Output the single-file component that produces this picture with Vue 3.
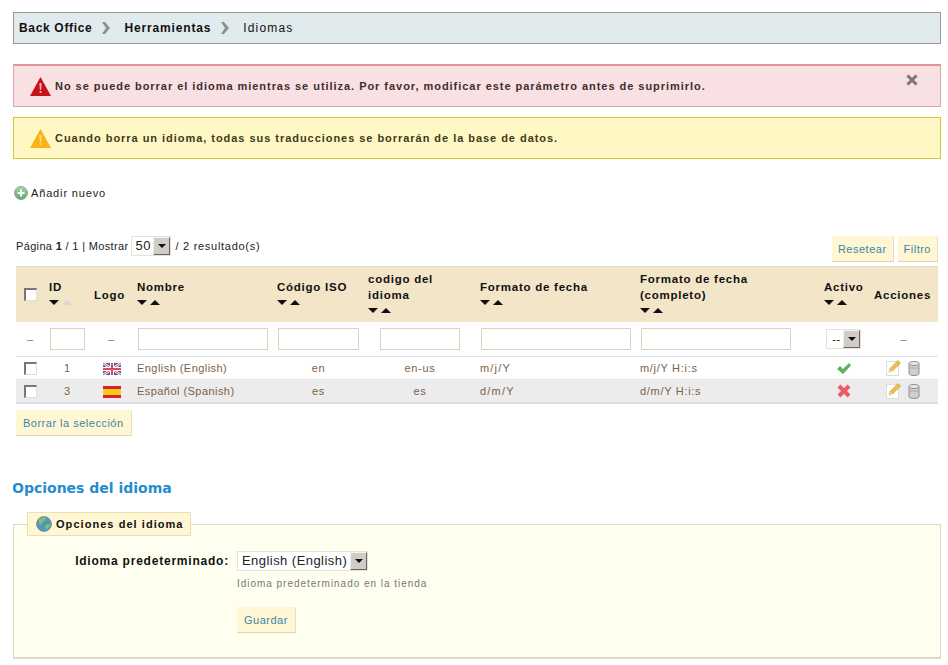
<script setup>
const rows = [
  { id: 1, flag: 'uk', name: 'English (English)', iso: 'en', code: 'en-us', date: 'm/j/Y', full: 'm/j/Y H:i:s', active: true },
  { id: 3, flag: 'es', name: 'Español (Spanish)', iso: 'es', code: 'es', date: 'd/m/Y', full: 'd/m/Y H:i:s', active: false }
]
const widths = [29, 45, 43, 140, 91, 112, 160, 184, 50, 68]
</script>

<template>
  <div class="page">
    <nav class="crumbs">
      <b class="c1">Back Office</b>
      <svg class="chev" width="10" height="12" viewBox="0 0 10 12"><path d="M1 0h3l5 6-5 6H1l4-6z" fill="#8f8f8f"/></svg>
      <b>Herramientas</b>
      <svg class="chev" width="10" height="12" viewBox="0 0 10 12"><path d="M1 0h3l5 6-5 6H1l4-6z" fill="#8f8f8f"/></svg>
      <span class="cur">Idiomas</span>
    </nav>

    <div class="alert error">
      <svg width="21" height="19" viewBox="0 0 21 19"><path d="M10.500 0 21 19H0z" fill="#c8121a"/><path d="M9.400 6h2.200l-.4 7H9.800z" fill="#f3b0a8"/><rect x="9.600" y="14" width="1.800" height="2" fill="#f3b0a8"/></svg>
      <span>No se puede borrar el idioma mientras se utiliza. Por favor, modificar este parámetro antes de suprimirlo.</span>
      <svg class="close" width="12" height="12" viewBox="0 0 12 12"><path d="M1.500 1.500l9 9m0-9l-9 9" stroke="#777" stroke-width="3"/></svg>
    </div>
    <div class="alert warn">
      <svg width="21" height="19" viewBox="0 0 21 19"><path d="M10.500 0 21 19H0z" fill="#fbb216"/><path d="M9.400 6h2.200l-.4 7H9.800z" fill="#fde39a"/><rect x="9.600" y="14" width="1.800" height="2" fill="#fde39a"/></svg>
      <span>Cuando borra un idioma, todas sus traducciones se borrarán de la base de datos.</span>
    </div>

    <a class="add">
      <svg width="14" height="14" viewBox="0 0 14 14"><defs><linearGradient id="addg" x1="0" y1="0" x2="0" y2="1"><stop offset="0" stop-color="#a8d6ae"/><stop offset="1" stop-color="#5fa86e"/></linearGradient></defs><circle cx="7" cy="7" r="6.500" fill="url(#addg)" stroke="#8aa996"/><path d="M7 3.500v7M3.500 7h7" stroke="#fff" stroke-width="2"/></svg>
      Añadir nuevo
    </a>

    <div class="listbar">
      <div class="pager">
        <span class="p1">Página <b>1</b> / 1 | Mostrar</span>
        <span class="sel sel50"><span class="val">50</span><span class="arrow"><i></i></span></span>
        <span class="p2">/ 2 resultado(s)</span>
      </div>
      <div class="btns">
        <button class="btn">Resetear</button>
        <button class="btn">Filtro</button>
      </div>
    </div>

    <table class="grid">
      <colgroup><col v-for="(w, i) in widths" :key="i" :style="{ width: w + 'px' }" /></colgroup>
      <thead>
        <tr>
          <th class="ctr"><span class="chk hchk"></span></th>
          <th>ID<div class="sort"><i class="dn"></i><i class="up off"></i></div></th>
          <th>Logo</th>
          <th>Nombre<div class="sort"><i class="dn"></i><i class="up"></i></div></th>
          <th>Código ISO<div class="sort"><i class="dn"></i><i class="up"></i></div></th>
          <th>codigo del idioma<div class="sort"><i class="dn"></i><i class="up"></i></div></th>
          <th>Formato de fecha<div class="sort"><i class="dn"></i><i class="up"></i></div></th>
          <th>Formato de fecha (completo)<div class="sort"><i class="dn"></i><i class="up"></i></div></th>
          <th>Activo<div class="sort"><i class="dn"></i><i class="up"></i></div></th>
          <th>Acciones</th>
        </tr>
      </thead>
      <tbody>
        <tr class="filter">
          <td class="ctr">–</td>
          <td class="ctr"><input class="w35" /></td>
          <td class="ctr">–</td>
          <td class="ctr"><input class="w130" /></td>
          <td class="ctr"><input class="w81" /></td>
          <td class="ctr"><input class="w80" /></td>
          <td class="ctr"><input class="w150" /></td>
          <td class="pad"><input class="w150" /></td>
          <td class="ctr"><span class="sel selact"><span class="val">--</span><span class="arrow"><i></i></span></span></td>
          <td class="ctr">–</td>
        </tr>
        <tr v-for="(r, i) in rows" :key="r.id" class="row" :class="{ alt: i === 1 }">
          <td class="ctr"><span class="chk"></span></td>
          <td class="ctr">{{ r.id }}</td>
          <td class="ctr flagcell">
            <svg v-if="r.flag === 'uk'" width="18" height="12" viewBox="0 0 18 12"><rect width="18" height="12" fill="#4a5a9c"/><path d="M0 0l18 12M18 0L0 12" stroke="#fff" stroke-width="2.600"/><path d="M0 0l18 12M18 0L0 12" stroke="#d84a62" stroke-width="1"/><path d="M9 0v12M0 6h18" stroke="#fff" stroke-width="4"/><path d="M9 0v12M0 6h18" stroke="#d84a62" stroke-width="2"/></svg>
            <svg v-else width="18" height="12" viewBox="0 0 18 12"><rect width="18" height="12" fill="#d9202c"/><rect y="3" width="18" height="6" fill="#f6c91e"/></svg>
          </td>
          <td class="txt name">{{ r.name }}</td>
          <td class="ctr">{{ r.iso }}</td>
          <td class="ctr">{{ r.code }}</td>
          <td class="txt date">{{ r.date }}</td>
          <td class="txt">{{ r.full }}</td>
          <td class="ctr icons state">
            <svg v-if="r.active" width="16" height="13" viewBox="0 0 16 13"><path d="M1 7l3-3 3 3 6-6 2 2.500L7 12z" fill="#5fb15f"/></svg>
            <svg v-else width="14" height="14" viewBox="0 0 14 14"><path d="M2 2l10 10m0-10L2 12" stroke="#ef5a64" stroke-width="4"/></svg>
          </td>
          <td class="ctr icons actions">
            <svg width="15" height="16" viewBox="0 0 15 16"><rect x=".5" y="1.500" width="12" height="14" fill="#fff" stroke="#dcdcdc"/><path d="M12 .5l2.500 2.500-8 8-3.500 1 1-3.500z" fill="#eebc47" stroke="#c99a2e" stroke-width=".6"/><path d="M3 12.500l1-3.500 2.500 2z" fill="#f4d9b0"/></svg>
            <svg width="12" height="15" viewBox="0 0 12 15"><path d="M1 2.500v10c0 1 2 2 5 2s5-1 5-2v-10z" fill="#cfcfcf" stroke="#8e8e8e"/><ellipse cx="6" cy="2.500" rx="5" ry="2" fill="#ececec" stroke="#8e8e8e"/><path d="M1.500 7h9" stroke="#a8a8a8"/></svg>
          </td>
        </tr>
      </tbody>
    </table>

    <button class="btn bulk">Borrar la selección</button>

    <h2 class="title">Opciones del idioma</h2>

    <fieldset class="box">
      <legend>
        <svg width="16" height="16" viewBox="0 0 16 16"><circle cx="8" cy="8" r="7.500" fill="#4a9bb8" stroke="#7f9f9f"/><path d="M3 4c2-2 5-3 7-2l-1 3-3 1-1 3-2-1zM10 9l3-1 1 2-3 3-2-1z" fill="#8dbd6a"/></svg>
        <span>Opciones del idioma</span>
      </legend>
      <div class="form">
        <label>Idioma predeterminado:</label>
        <div>
          <span class="sel sellang"><span class="val">English (English)</span><span class="arrow"><i></i></span></span>
          <p class="hint">Idioma predeterminado en la tienda</p>
          <button class="btn save">Guardar</button>
        </div>
      </div>
    </fieldset>
  </div>
</template>

<style scoped>
.page {
  width: 928px;
  height: 665px;
  box-sizing: border-box;
  margin-left: 13px;
  padding-top: 12px;
  font-family: "Liberation Sans", Arial, sans-serif;
  font-size: 11px;
  letter-spacing: 0.5px;
  color: #222;
  overflow: hidden;
}
.crumbs {
  height: 32px;
  box-sizing: border-box;
  display: flex;
  align-items: center;
  padding-left: 5px;
  background: #e1eaed;
  border: 1px solid #999;
  font-size: 12px;
  letter-spacing: 0.85px;
  color: #111;
}
.c1 { letter-spacing: 0.67px; }
.cur { letter-spacing: 1.15px; }
.chev { margin: 0 13px 0 9px; }
.alert {
  position: relative;
  box-sizing: border-box;
  display: flex;
  align-items: center;
  gap: 4px;
  padding-left: 16px;
  font-weight: bold;
  font-size: 11px;
  letter-spacing: 0.96px;
  color: #3d2f2f;
  border: 1px solid;
}
.error {
  height: 43px;
  margin-top: 20px;
  background: #f9e0e2;
  border-color: #e3a3a8;
  border-top: 2px solid #e59397;
}
.warn {
  height: 42px;
  margin-top: 10px;
  background: #fff8c4;
  border-color: #d5c636;
  color: #3c3a20;
}
.close { position: absolute; right: 22px; top: 8px; }
.add {
  display: flex;
  align-items: center;
  gap: 3px;
  margin: 27px 0 0 1px;
  height: 14px;
  letter-spacing: 0.85px;
  color: #222;
}
.listbar {
  display: flex;
  justify-content: space-between;
  align-items: flex-start;
  margin-top: 36px;
  padding-left: 3px;
}
.pager {
  display: flex;
  align-items: center;
  gap: 3px;
  height: 20px;
  white-space: pre;
}
.p1 { letter-spacing: 0.34px; }
.p2 { letter-spacing: 0.72px; margin-left: 1px; }
.pager b { color: #222; }
.btns { display: flex; gap: 4px; margin-right: 3px; margin-left: auto; }
.btn {
  box-sizing: border-box;
  height: 26px;
  padding: 0 6px;
  background: #fff6d3;
  border: none;
  border-right: 1px solid #e8dfc0;
  border-bottom: 1px solid #e0d6b4;
  color: #3a87a8;
  font: 11px "Liberation Sans", Arial, sans-serif;
  letter-spacing: 0.5px;
}
.sel {
  display: inline-flex;
  box-sizing: border-box;
  align-items: stretch;
  border: 1px solid #e6e2d8;
  background: #fff;
  color: #222;
}
.val { flex: 1; padding-left: 3px; }
.arrow {
  width: 17px;
  display: flex;
  align-items: center;
  justify-content: center;
  background: #d0cdc6;
  border-top: 1px solid #f2f2f0;
  border-left: 1px solid #f2f2f0;
  border-right: 1px solid #666;
  border-bottom: 1px solid #666;
  box-sizing: border-box;
}
.arrow i {
  width: 0; height: 0;
  border-left: 4px solid transparent;
  border-right: 4px solid transparent;
  border-top: 4px solid #111;
}
.sel50 { width: 40px; height: 20px; font-size: 13px; line-height: 18px; }
.selact { width: 35px; height: 20px; line-height: 18px; font-size: 11px; margin-right: 3px; vertical-align: middle; }
.sellang { width: 131px; height: 20px; font-size: 13px; line-height: 18px; letter-spacing: 0.45px; white-space: nowrap; }
.sellang .val { padding-left: 4px; }
.grid {
  width: 922px;
  margin: 4px 0 0 3px;
  table-layout: fixed;
  border-collapse: collapse;
}
.grid th {
  height: 55px;
  padding: 0 4px;
  background: #f2e5c8;
  border-top: 1px solid #e3dcc8;
  text-align: left;
  font-size: 11.500px;
  line-height: 16px;
  letter-spacing: 0.75px;
  color: #111;
}
.sort { display: flex; align-items: center; gap: 3px; height: 16px; }
.sort i { width: 0; height: 0; border-left: 5px solid transparent; border-right: 5px solid transparent; }
.sort .dn { border-top: 5px solid #111; }
.sort .up { border-bottom: 5px solid #111; }
.sort .off { border-bottom-color: #d8d8d8; }
.grid td { padding: 0; color: #7c6248; letter-spacing: 0.7px; }
.grid td.name { letter-spacing: 0.45px; }
.grid td.date { letter-spacing: 1.2px; }
.ctr { text-align: center; }
.grid th.ctr { text-align: center; padding: 0; }
.filter td { height: 34px; border-bottom: 1px solid #e4e4e4; color: #777; }
.pad { padding-left: 5px !important; }
input {
  display: block;
  box-sizing: border-box;
  height: 22px;
  margin: 0 auto;
  padding: 0;
  background: #fff;
  border: 1px solid #dcd3bd;
  border-radius: 0;
}
.pad input { margin: 0; }
.w35 { width: 35px; }
.w80 { width: 80px; }
.w81 { width: 81px; }
.w130 { width: 130px; }
.w150 { width: 150px; }
.row td { height: 22px; border-bottom: 1px solid #e6e6e6; }
.row.alt td { background: #ececec; border-bottom: 2px solid #dcdcdc; }
.row .txt { padding-left: 4px; }
.row svg { display: inline-block; vertical-align: middle; }
.icons.actions svg + svg { margin-left: 7px; }
.icons.actions { padding-right: 2px; }
.icons.state { padding-right: 2px; }
.chk {
  display: inline-block;
  vertical-align: middle;
  box-sizing: border-box;
  width: 13px;
  height: 13px;
  background: #fff;
  border-top: 2px solid #777;
  border-left: 2px solid #777;
  border-right: 1px solid #ddd;
  border-bottom: 1px solid #ddd;
}
.hchk { margin-bottom: 2px; }
.bulk { display: block; margin: 6px 0 0 3px; height: 26px; padding: 0 7px; }
.title {
  margin: 43px 0 0 -1px;
  height: 19px;
  font: bold 14px/19px "DejaVu Sans", sans-serif;
  letter-spacing: 0;
  color: #268ccd;
}
.box {
  box-sizing: border-box;
  height: 147px;
  margin: 14px 0 0 0;
  padding: 0;
  background: #fffff0;
  border: 1px solid #e0d8c0;
  border-bottom-width: 2px;
  min-width: 0;
}
legend {
  box-sizing: border-box;
  display: flex;
  align-items: center;
  gap: 4px;
  height: 24px;
  width: 164px;
  margin-left: 13px;
  padding: 0 0 0 8px;
  background: #fff6d3;
  border: 1px solid #eadfb5;
  font-weight: bold;
  font-size: 11px;
  letter-spacing: 1.05px;
  color: #111;
}
.form {
  display: grid;
  grid-template-columns: 215px 1fr;
  column-gap: 8px;
  padding-top: 15px;
}
.form label {
  text-align: right;
  font-weight: bold;
  font-size: 12px;
  letter-spacing: 0.78px;
  line-height: 20px;
  color: #111;
}
.hint { margin: 6px 0 0; font-size: 10px; line-height: 14px; letter-spacing: 0.97px; color: #777; }
.save { display: block; margin-top: 16px; padding: 0 7px; height: 26px; }
</style>

<style>
html, body { margin: 0; background: #fff; overflow: hidden; }
</style>
